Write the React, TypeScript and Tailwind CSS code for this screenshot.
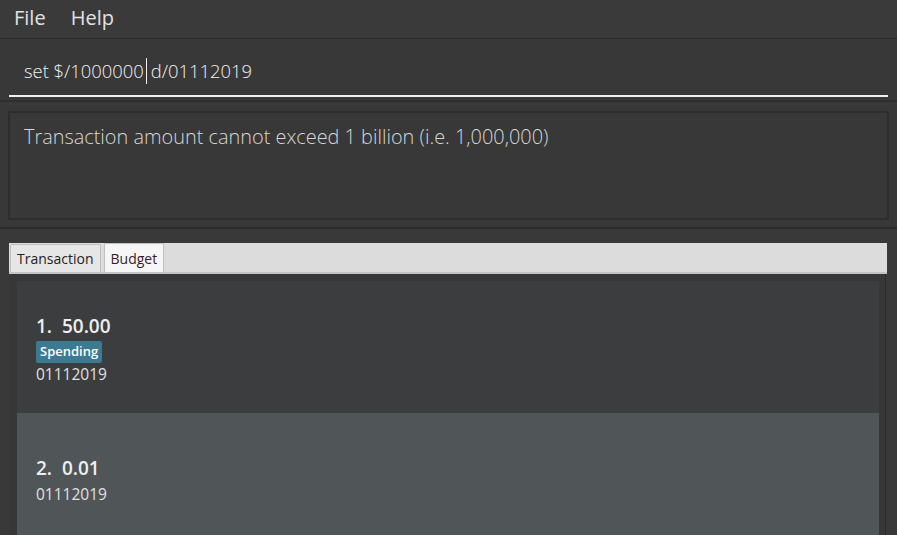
export default function App() {
  return (
    <div
      className="w-[897px] h-[535px] overflow-hidden bg-[#383838] flex flex-col"
      style={{ fontFamily: '"Open Sans", "Noto Sans", sans-serif' }}
    >
      {/* menu bar */}
      <div className="h-[39px] shrink-0 flex items-center gap-[25px] px-[14px] pb-[2px] border-b border-[#2b2b2b] bg-[#3a3a3a] text-[20px] text-[#e2e2e2]">
        <span>File</span>
        <span>Help</span>
      </div>

      {/* command box */}
      <div className="h-[63px] shrink-0 px-[9px] pt-[19px] border-b-2 border-[#2e2e2e]">
        <div className="h-[39px] flex items-start border-b-2 border-[#f0f0f0] pl-[15px]">
          <span className="text-[18.4px] font-light text-[#f2f2f2] leading-[26px]">
            set $/1000000
          </span>
          <span className="w-px h-[26px] bg-[#f0f0f0] ml-[2px] mr-[4px]" />
          <span className="text-[18.4px] font-light text-[#f2f2f2] leading-[26px]">
            d/01112019
          </span>
        </div>
      </div>

      {/* result display */}
      <div className="h-[127px] shrink-0 px-[8px] pt-[9px] pb-[7px] border-b-2 border-[#2b2b2b]">
        <div className="h-full border-2 border-[#2d2d2d] bg-[#383838] px-[14px] pt-[9px]">
          <p className="text-[19.9px] font-light text-[#d6d6d6]">
            Transaction amount cannot exceed 1 billion (i.e. 1,000,000)
          </p>
        </div>
      </div>

      {/* tabs */}
      <div className="flex-1 px-[9px] pt-[14px] bg-[#393939]">
        <div className="w-[878px] h-[31px] bg-[#dcdcdc] border-b-2 border-[#c4c4c4] flex items-end gap-[3px] px-[1px]">
          <div className="h-[28px] px-[6px] flex items-center bg-[#e6e6e6] border border-b-0 border-[#c0c0c0] rounded-t-[2px] text-[14px] text-[#222]">
            Transaction
          </div>
          <div className="h-[29px] px-[6px] flex items-center bg-[#f6f6f6] border border-b-0 border-[#c0c0c0] rounded-t-[2px] text-[14px] text-[#3a1a2a]">
            Budget
          </div>
        </div>

        <div className="w-[877px] h-full border-r border-[#2a2a2a] bg-[#363738] pl-[8px] pr-[6px] pt-[7px]">
          <div className="h-[132px] bg-[#3c3d3f] pl-[19px] pt-[32px] flex flex-col items-start">
            <span className="text-[19px] font-semibold text-[#eeeeee] leading-[26px]">
              1.&nbsp;&nbsp;50.00
            </span>
            <span className="mt-[2px] px-[4px] h-[22px] flex items-center rounded-[2px] bg-[#3b7a91] text-[13px] font-semibold text-white">
              Spending
            </span>
            <span className="text-[15.5px] text-[#e0e0e0] leading-[22px]">01112019</span>
          </div>
          <div className="h-[130px] bg-[#505558] pl-[19px] pt-[42px] flex flex-col items-start">
            <span className="text-[19px] font-semibold text-[#eeeeee] leading-[26px]">
              2.&nbsp;&nbsp;0.01
            </span>
            <span className="mt-[2px] text-[15.5px] text-[#e0e0e0] leading-[22px]">01112019</span>
          </div>
        </div>
      </div>
    </div>
  );
}
